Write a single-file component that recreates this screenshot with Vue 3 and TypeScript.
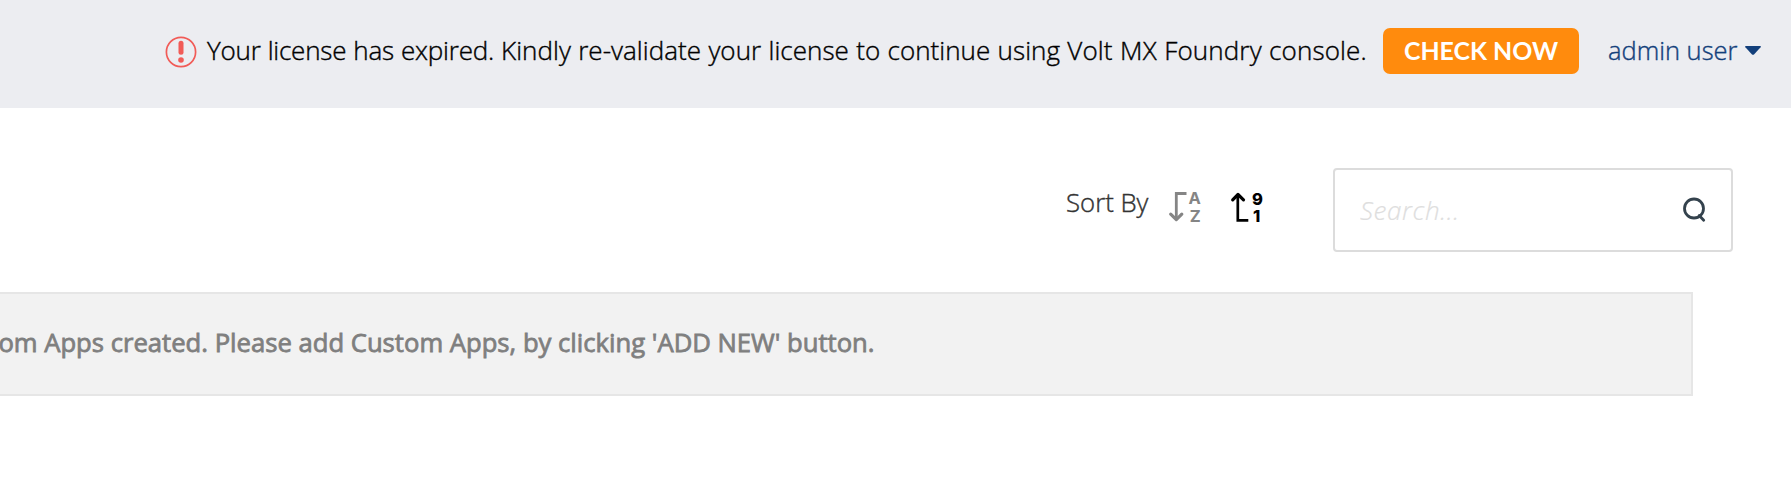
<script setup lang="ts">
import { ref } from 'vue'

const query = ref('')
const emptyMessage = "No Custom Apps created. Please add Custom Apps, by clicking 'ADD NEW' button."
</script>

<template>
  <div class="page">
    <header class="topbar">
      <svg class="alert" width="32" height="32" viewBox="0 0 32 32" fill="none">
        <circle cx="16" cy="16" r="14.6" stroke="#f15b57" stroke-width="1.7" />
        <path d="M16 7.3v9" stroke="#f15b57" stroke-width="5" stroke-linecap="round" />
        <circle cx="16" cy="24" r="2.8" fill="#f15b57" />
      </svg>
      <div class="notice"><span class="status">Your license has expired. </span><span class="action">Kindly re-validate your license to continue using </span><span class="product">Volt MX Foundry console.</span></div>
      <button class="check" type="button"><span class="fit">CHECK NOW</span></button>
      <div class="user"><span class="fit">admin user</span></div>
      <svg class="caret" width="16" height="9" viewBox="0 0 16 9"><path d="M.7 0h14.6q1 .4.3 1.2L9 8.4q-1 .9-2 0L.4 1.200Q-.3.4.7 0z" fill="#123f7b" /></svg>
    </header>

    <section class="tools">
      <div class="sort"><span class="fit">Sort By</span></div>
      <svg class="az" width="34" height="32" viewBox="0 0 34 32" fill="none" stroke="#858585">
        <path d="M18.500 2.500H8.300V28" stroke-width="2.800" />
        <path d="M2.700 23.200L8.300 28.600l5.500-5.400" stroke-width="3.200" stroke-linecap="round" stroke-linejoin="round" />
        <text class="glyph grey" x="20.500" y="13.300">A</text>
        <text class="glyph grey" x="21.800" y="31.200">Z</text>
      </svg>
      <svg class="num" width="34" height="32" viewBox="0 0 34 32" fill="none" stroke="#000">
        <path d="M7.800 4V29.300h10.500" stroke-width="2.700" />
        <path d="M2.700 8.800L8 3.500l5.500 5.300" stroke-width="3.200" stroke-linecap="round" stroke-linejoin="round" />
        <text class="glyph" x="22" y="13.600">9</text>
        <text class="glyph" x="22.900" y="31">1</text>
      </svg>
      <label class="search">
        <input v-model="query" type="text" placeholder="Search..." />
        <svg width="24" height="26" viewBox="0 0 24 26" fill="none" stroke="#34424d" stroke-width="2.800">
          <circle cx="12" cy="11.500" r="9.500" />
          <path d="M17.200 18.500l4.500 4.700" stroke-linecap="round" />
        </svg>
      </label>
    </section>

    <section class="empty"><span class="message">{{ emptyMessage }}</span></section>
  </div>
</template>

<style>
body { margin: 0; background: #fff; }
</style>

<style scoped>
.page { width: 1791px; height: 486px; overflow: hidden; font-family: "Open Sans", "Noto Sans", sans-serif; font-size: 26px; font-weight: 300; line-height: 36px; color: #000; background: #fff; -webkit-text-stroke: .4px currentColor; }
.fit { display: inline-block; white-space: nowrap; transform-origin: 0 50%; }
.topbar { display: flex; box-sizing: border-box; height: 108px; padding: 28px 30px 0 165px; background: #ecedf1; }
.alert { flex: none; margin-top: 8px; }
.notice { flex: none; width: 1176px; margin-left: 10px; padding-top: 4px; white-space: pre; word-spacing: .5px; }
.status { letter-spacing: -.21px; }
.action { letter-spacing: .04px; }
.product { letter-spacing: .14px; }
.check { flex: none; box-sizing: border-box; width: 196px; height: 46px; padding: 0 0 0 21px; border: 0; border-radius: 7px; background: #ff8b0d; color: #fff; font-family: Lato, sans-serif; font-size: 24px; font-weight: 700; line-height: 46px; text-align: left; -webkit-text-stroke: 0; }
.check .fit { transform: scaleX(1.036); }
.user { flex: none; width: 136px; margin-left: 30px; padding-top: 4px; color: #123f7b; }
.user .fit { transform: translateX(-1px) scaleX(.98); }
.caret { flex: none; margin-top: 18px; }
.tools { display: flex; height: 84px; padding: 60px 0 0 1066px; }
.sort { width: 102px; flex: none; padding-top: 16px; color: #333; }
.sort .fit { transform: scaleX(.99); }
.az, .num { overflow: visible; }
.az { flex: none; margin-top: 23px; }
.num { flex: none; margin: 23px 0 0 28px; }
.glyph { fill: #000; stroke: none; -webkit-text-stroke: 0; font: 800 16.5px Inter, sans-serif; }
.glyph.grey { fill: #858585; font-weight: 700; }
.search { display: flex; flex: none; align-items: flex-start; box-sizing: border-box; width: 400px; height: 84px; margin-left: 69px; border: 2px solid #dcdcdc; border-radius: 4px; }
.search input { width: 320px; height: 80px; box-sizing: border-box; padding: 0 0 0 25px; border: 0; outline: 0; background: transparent; font: italic 300 26px "Open Sans", sans-serif; letter-spacing: .6px; color: #333; -webkit-text-stroke: .2px currentColor; }
.search input::placeholder { color: #dedede; opacity: 1; }
.search svg { flex: none; margin: 27px 0 0 27px; }
.empty { display: flex; justify-content: flex-end; box-sizing: border-box; width: 1693px; height: 104px; margin-top: 40px; padding: 30px 816px 0 0; border: 2px solid #e6e6e6; border-left: 0; background: #f2f2f2; color: #7f7f7f; font-weight: 400; -webkit-text-stroke: .8px currentColor; }
.message { flex: none; white-space: nowrap; transform: scaleX(.986); transform-origin: 100% 50%; }
</style>
